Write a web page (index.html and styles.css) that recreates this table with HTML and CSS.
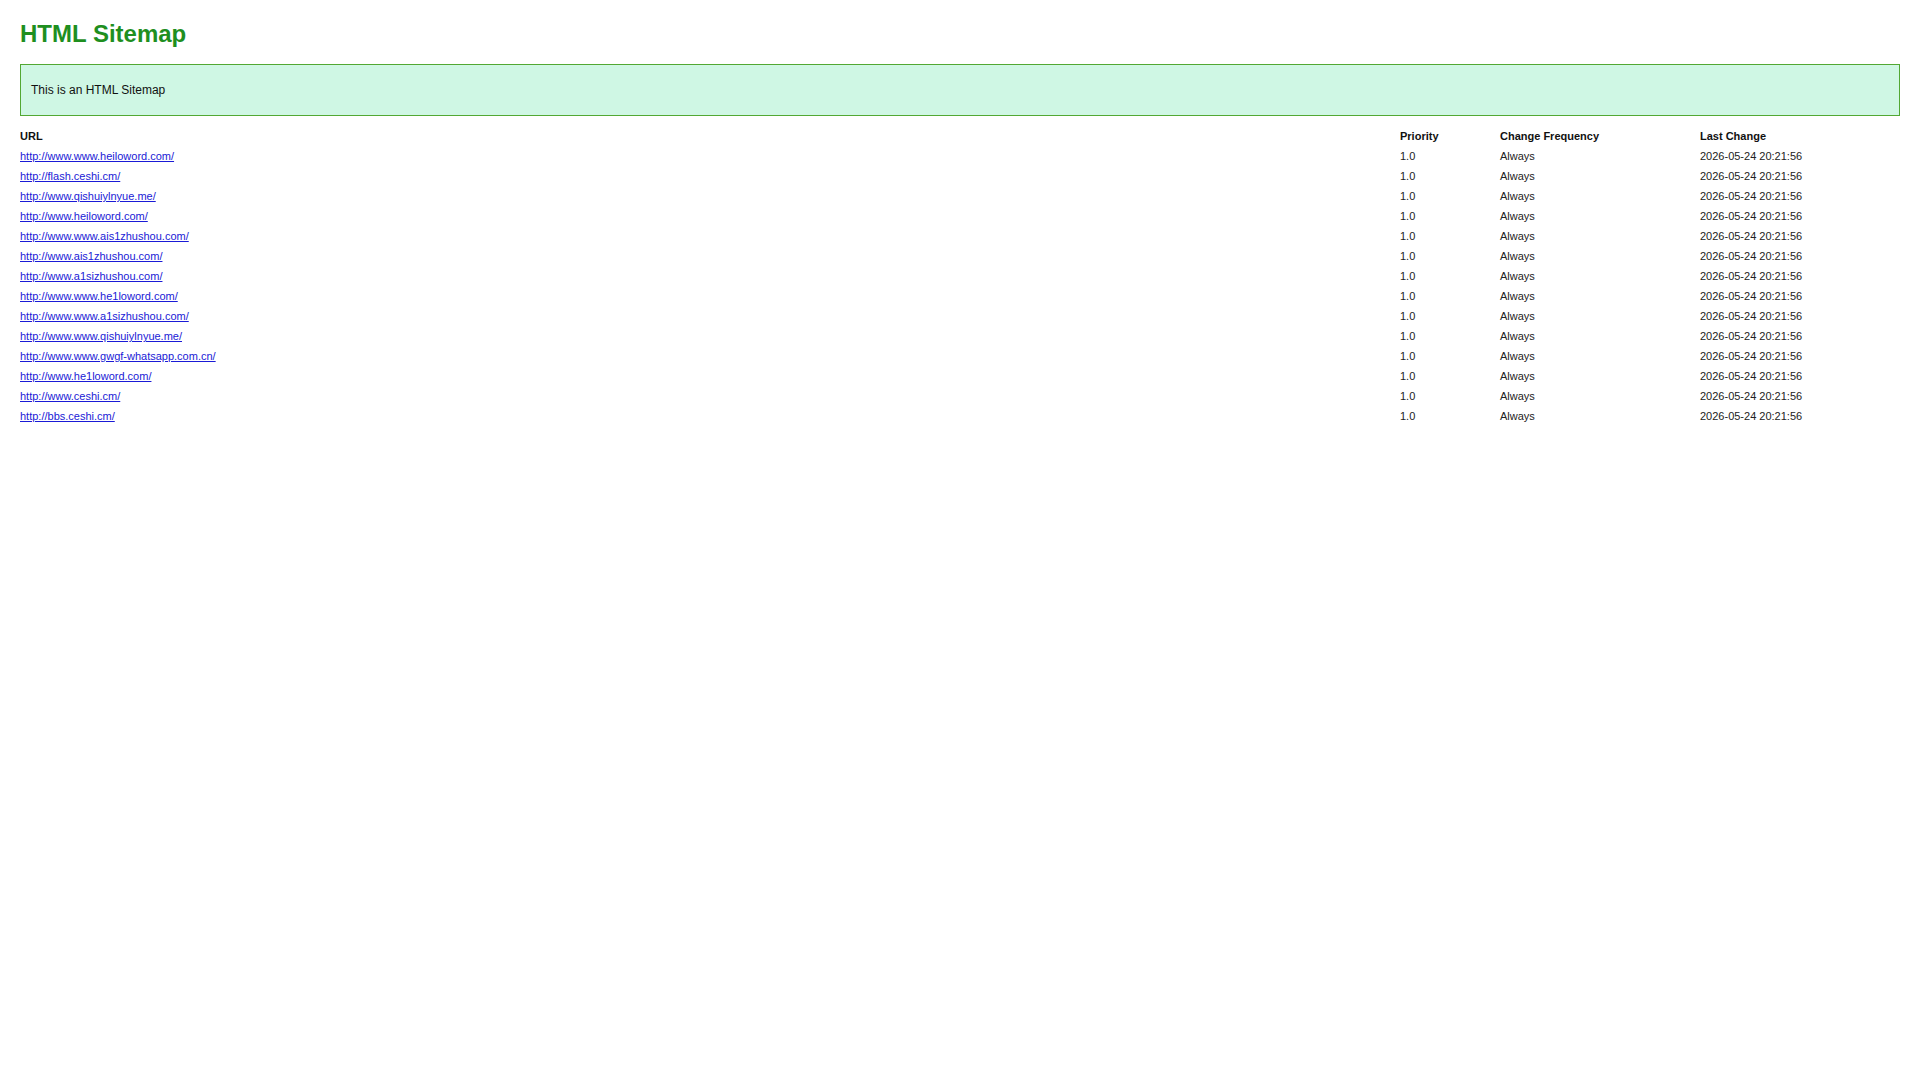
FILE: index.html
```html
<!DOCTYPE html>
<html>
<head>
<meta charset="utf-8">
<title>HTML Sitemap</title>
<link rel="stylesheet" href="styles.css">
</head>
<body>
<h1 class="title">HTML Sitemap</h1>
<div class="intro">This is an HTML Sitemap</div>
<table class="sitemap">
<colgroup><col class="c-url"><col class="c-pri"><col class="c-freq"><col class="c-last"></colgroup>
<thead>
<tr><th>URL</th><th>Priority</th><th>Change Frequency</th><th>Last Change</th></tr>
</thead>
<tbody>
<tr><td><a href="#">http://www.www.heiloword.com/</a></td><td>1.0</td><td>Always</td><td>2026-05-24 20:21:56</td></tr>
<tr><td><a href="#">http://flash.ceshi.cm/</a></td><td>1.0</td><td>Always</td><td>2026-05-24 20:21:56</td></tr>
<tr><td><a href="#">http://www.qishuiylnyue.me/</a></td><td>1.0</td><td>Always</td><td>2026-05-24 20:21:56</td></tr>
<tr><td><a href="#">http://www.heiloword.com/</a></td><td>1.0</td><td>Always</td><td>2026-05-24 20:21:56</td></tr>
<tr><td><a href="#">http://www.www.ais1zhushou.com/</a></td><td>1.0</td><td>Always</td><td>2026-05-24 20:21:56</td></tr>
<tr><td><a href="#">http://www.ais1zhushou.com/</a></td><td>1.0</td><td>Always</td><td>2026-05-24 20:21:56</td></tr>
<tr><td><a href="#">http://www.a1sizhushou.com/</a></td><td>1.0</td><td>Always</td><td>2026-05-24 20:21:56</td></tr>
<tr><td><a href="#">http://www.www.he1loword.com/</a></td><td>1.0</td><td>Always</td><td>2026-05-24 20:21:56</td></tr>
<tr><td><a href="#">http://www.www.a1sizhushou.com/</a></td><td>1.0</td><td>Always</td><td>2026-05-24 20:21:56</td></tr>
<tr><td><a href="#">http://www.www.qishuiylnyue.me/</a></td><td>1.0</td><td>Always</td><td>2026-05-24 20:21:56</td></tr>
<tr><td><a href="#">http://www.www.gwgf-whatsapp.com.cn/</a></td><td>1.0</td><td>Always</td><td>2026-05-24 20:21:56</td></tr>
<tr><td><a href="#">http://www.he1loword.com/</a></td><td>1.0</td><td>Always</td><td>2026-05-24 20:21:56</td></tr>
<tr><td><a href="#">http://www.ceshi.cm/</a></td><td>1.0</td><td>Always</td><td>2026-05-24 20:21:56</td></tr>
<tr><td><a href="#">http://bbs.ceshi.cm/</a></td><td>1.0</td><td>Always</td><td>2026-05-24 20:21:56</td></tr>
</tbody>
</table>
</body>
</html>
```
FILE: styles.css
```css
html, body {
  margin: 0;
  background: #ffffff;
}
body {
  padding: 0 20px;
  font-family: "Liberation Sans", Arial, Helvetica, sans-serif;
  color: #000000;
}
.title {
  margin: 20px 0 16px;
  font-size: 24px;
  line-height: 28px;
  font-weight: bold;
  color: #1f8f1f;
}
.intro {
  border: 1px solid #52a833;
  background: #cff7e4;
  padding: 18px 10px;
  font-size: 12px;
  line-height: 14px;
  color: #111111;
}
.sitemap {
  margin-top: 10px;
  width: 100%;
  border-collapse: collapse;
  table-layout: fixed;
  font-size: 11px;
}
.c-url { width: 1380px; }
.c-pri { width: 100px; }
.c-freq { width: 200px; }
.c-last { width: 200px; }
.sitemap th,
.sitemap td {
  padding: 0;
  height: 20px;
  line-height: 20px;
  text-align: left;
  vertical-align: middle;
  white-space: nowrap;
}
.sitemap th {
  font-weight: bold;
  color: #111111;
}
.sitemap td {
  color: #222222;
}
.sitemap a {
  color: #1a1ad6;
  text-decoration: underline;
}
```
